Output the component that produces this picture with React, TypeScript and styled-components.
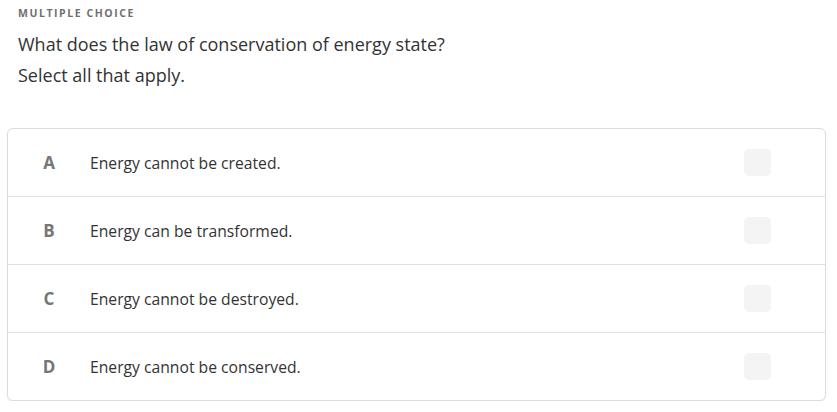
import styled, { createGlobalStyle } from "styled-components";

const GlobalStyle = createGlobalStyle`
  body {
    margin: 0;
    background: #ffffff;
    font-family: "Open Sans", "Liberation Sans", sans-serif;
  }
`;

const options = [
  { letter: "A", text: "Energy cannot be created." },
  { letter: "B", text: "Energy can be transformed." },
  { letter: "C", text: "Energy cannot be destroyed." },
  { letter: "D", text: "Energy cannot be conserved." },
];

export default function App() {
  return (
    <S.Page>
      <GlobalStyle />
      <S.Header>
        <S.Kind>Multiple choice</S.Kind>
        <S.Question>What does the law of conservation of energy state?</S.Question>
        <S.Hint>Select all that apply.</S.Hint>
      </S.Header>
      <S.Card>
        {options.map((o) => (
          <S.Row key={o.letter}>
            <S.Letter>{o.letter}</S.Letter>
            <S.Text>{o.text}</S.Text>
            <S.Check />
          </S.Row>
        ))}
      </S.Card>
    </S.Page>
  );
}

const S = {
  Page: styled.div`
    display: flex;
    flex-direction: column;
    padding: 6px 11px 0 7px;
  `,

  Header: styled.div`
    display: flex;
    flex-direction: column;
    padding-left: 11px;
    margin-bottom: 41px;
  `,

  Kind: styled.div`
    font-size: 10.5px;
    font-weight: 700;
    letter-spacing: 1.55px;
    text-transform: uppercase;
    color: #6f6f6f;
    line-height: 14px;
  `,

  Question: styled.div`
    margin-top: 12px;
    font-size: 18px;
    color: #333333;
    line-height: 24px;
  `,

  Hint: styled.div`
    margin-top: 7px;
    font-size: 18px;
    color: #333333;
    line-height: 24px;
  `,

  Card: styled.div`
    display: flex;
    flex-direction: column;
    border: 1px solid #dcdcdc;
    border-radius: 6px;
    box-shadow: 0 1px 2px rgba(0, 0, 0, 0.06);
    background: #ffffff;
  `,

  Row: styled.div`
    display: flex;
    align-items: center;
    height: 67px;
    border-top: 1px solid #e0e0e0;

    &:first-child {
      border-top: none;
    }
  `,

  Letter: styled.div`
    width: 82px;
    text-align: center;
    font-size: 17px;
    font-weight: 700;
    color: #767676;
  `,

  Text: styled.div`
    flex: 1;
    font-size: 15.7px;
    color: #333333;
  `,

  Check: styled.div`
    width: 27px;
    height: 27px;
    margin-right: 54px;
    border-radius: 5px;
    background: #f4f4f4;
  `,
};
